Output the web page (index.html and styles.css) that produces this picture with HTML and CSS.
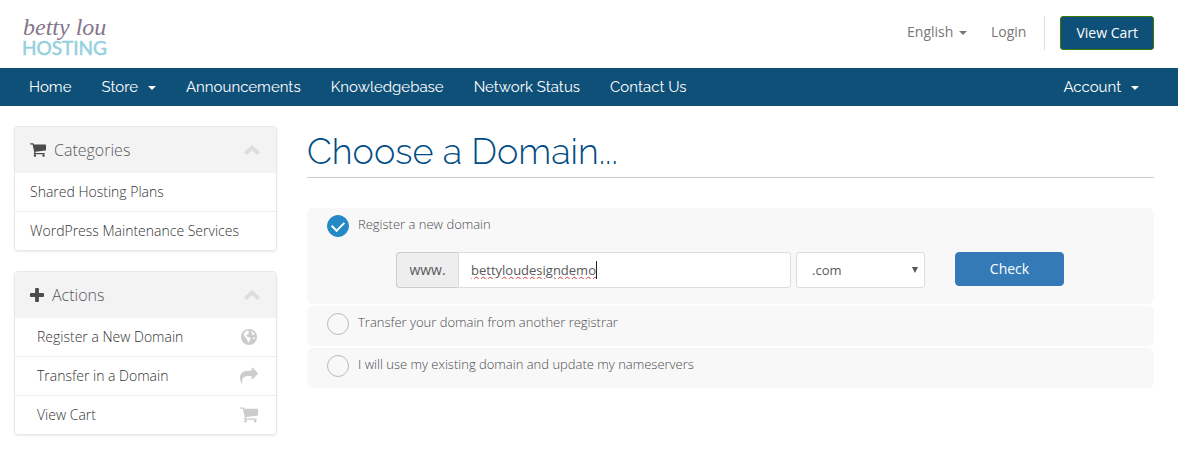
FILE: index.html
```html
<!DOCTYPE html>
<html lang="en">
  <head>
    <meta charset="UTF-8" />
    <meta name="viewport" content="width=device-width, initial-scale=1.0" />
    <title>Choose a Domain - Betty Lou Hosting</title>
    <link rel="stylesheet" href="styles.css">
  </head>
  <body>
    <!-- Shared icons -->
    <svg class="sprite" aria-hidden="true">
      <symbol id="icon-cart" viewBox="64 192 1664 1536">
        <path d="M704 1536q0 52-38 90t-90 38-90-38-38-90 38-90 90-38 90 38 38 90zm896 0q0 52-38 90t-90 38-90-38-38-90 38-90 90-38 90 38 38 90zm128-1088v512q0 24-16.500 42.500t-40.500 21.500l-1044 122q13 60 13 70 0 16-24 64h920q26 0 45 19t19 45-19 45-45 19h-1024q-26 0-45-19t-19-45q0-11 8-31.500t16-36 21.500-40 15.500-29.500l-177-823h-204q-26 0-45-19t-19-45 19-45 45-19h256q16 0 28.500 6.500t19.500 15.500 13 24.500 8 26 5.500 29.500 4.500 26h1201q26 0 45 19t19 45z"/>
      </symbol>
      <symbol id="icon-plus" viewBox="192 128 1408 1408">
        <path d="M1600 736v192q0 40-28 68t-68 28h-416v416q0 40-28 68t-68 28h-192q-40 0-68-28t-28-68v-416h-416q-40 0-68-28t-28-68v-192q0-40 28-68t68-28h416v-416q0-40 28-68t68-28h192q40 0 68 28t28 68v416h416q40 0 68 28t28 68z"/>
      </symbol>
      <symbol id="icon-share" viewBox="0 0 1792 1792">
        <path d="M1792 640q0 26-19 45l-512 512q-19 19-45 19t-45-19-19-45v-256h-224q-98 0-175.500 6t-154 21.500-133 42.500-105.500 69.500-80 101-48.500 138.500-17.500 181q0 55 5 123 0 6 2.500 23.500t2.500 26.500q0 15-8.500 25t-23.500 10q-16 0-28-17-7-9-13-22t-13.500-30-10.500-24q-127-285-127-451 0-199 53-333 162-403 875-403h224v-256q0-26 19-45t45-19 45 19l512 512q19 19 19 45z"/>
      </symbol>
      <symbol id="icon-globe" viewBox="-1 -1 18 18">
        <circle cx="8" cy="8" r="8"/>
        <path fill="#fff" d="M4.200 2.800L6.500 1.600L8 2.200L7.200 3.300L8.200 4L6.800 5.600L5.600 6L5 7L6.300 7.400L8.600 8.400L9.800 9.600L8.800 11.300L7.600 13.300L6.900 13.800L6.500 11.600L5.500 9.800L4 8L2.800 6.600L3 4.500Z M10.300 2.200L12.400 3.400L13.600 5.200L12 6L10.500 5.400L11.300 4.300L9.900 3.200Z M12 8.600L14 8L13.800 9.600L12.600 10.800Z"/>
      </symbol>
      <symbol id="icon-chevron" viewBox="0 0 16 10">
        <path d="M8 0L16 7.300L13.300 10L8 5.200L2.700 10L0 7.300Z"/>
      </symbol>
    </svg>

    <header class="header container">
      <a class="logo" href="#" aria-label="Betty Lou Hosting">
        <svg width="90" height="50" viewBox="0 0 90 50">
          <text class="logo-hosting" x="8" y="47">HOSTING</text>
          <text class="logo-script" x="9" y="27">betty lou</text>
        </svg>
      </a>
      <div class="top-nav">
        <a href="#">English <span class="caret"></span></a>
        <a href="#">Login</a>
        <div class="cart-wrap">
          <button type="button" class="btn btn-cart">View Cart</button>
        </div>
      </div>
    </header>

    <nav class="main-menu">
      <div class="container menu-inner">
        <a href="#">Home</a>
        <a href="#">Store <span class="caret"></span></a>
        <a href="#">Announcements</a>
        <a href="#">Knowledgebase</a>
        <a href="#">Network Status</a>
        <a href="#">Contact Us</a>
        <a href="#" class="account">Account <span class="caret"></span></a>
      </div>
    </nav>

    <div class="container page">
      <aside class="sidebar">
        <section class="panel">
          <h3 class="panel-heading">
            <svg class="icon"><use href="#icon-cart"/></svg>
            Categories
            <svg class="chevron"><use href="#icon-chevron"/></svg>
          </h3>
          <a class="panel-item" href="#">Shared Hosting Plans</a>
          <a class="panel-item" href="#">WordPress Maintenance Services</a>
        </section>

        <section class="panel actions">
          <h3 class="panel-heading">
            <svg class="icon icon-plus"><use href="#icon-plus"/></svg>
            Actions
            <svg class="chevron"><use href="#icon-chevron"/></svg>
          </h3>
          <a class="panel-item" href="#">Register a New Domain <svg class="icon"><use href="#icon-globe"/></svg></a>
          <a class="panel-item" href="#">Transfer in a Domain <svg class="icon"><use href="#icon-share"/></svg></a>
          <a class="panel-item" href="#">View Cart <svg class="icon"><use href="#icon-cart"/></svg></a>
        </section>
      </aside>

      <main class="content">
        <h1>Choose a Domain...</h1>
        <form id="domainForm">
          <div class="option">
            <label class="option-label">
              <input type="radio" name="domainoption" value="register" checked>
              <span>Register a new domain</span>
            </label>
            <div class="domain-row">
              <div class="input-group">
                <label class="addon" for="sld">www.</label>
                <div class="field">
                  <input type="text" id="sld" name="sld" value="bettyloudesigndemo" autocomplete="off">
                  <span class="text-cursor"></span>
                </div>
              </div>
              <div class="select-wrap">
                <select name="tld" aria-label="Domain extension">
                  <option>.com</option>
                  <option>.net</option>
                  <option>.org</option>
                </select>
              </div>
              <button type="submit" class="btn btn-check">Check</button>
            </div>
          </div>
          <div class="option">
            <label class="option-label">
              <input type="radio" name="domainoption" value="transfer">
              <span>Transfer your domain from another registrar</span>
            </label>
          </div>
          <div class="option">
            <label class="option-label">
              <input type="radio" name="domainoption" value="owndomain">
              <span>I will use my existing domain and update my nameservers</span>
            </label>
          </div>
        </form>
      </main>
    </div>
  </body>
</html>
```
FILE: styles.css
```css
* {
  box-sizing: border-box;
}
body {
  margin: 0;
  background-color: #fff;
  color: #58595b;
  font-family: "Open Sans", sans-serif;
  font-size: 14px;
  line-height: 20px;
}
a {
  color: inherit;
  text-decoration: none;
}
.sprite {
  display: none;
}
.container {
  padding: 0 24px 0 14px;
}

/* Header */
.header {
  display: flex;
  justify-content: space-between;
  align-items: flex-start;
  height: 68px;
}
.logo {
  padding-top: 8px;
}
.logo svg {
  display: block;
  overflow: visible;
}
.logo-script {
  font-family: "Liberation Serif", serif;
  font-size: 24px;
  font-style: italic;
  fill: #85758a;
}
.logo-hosting {
  font-family: Lato, sans-serif;
  font-size: 19px;
  fill: #94d0de;
  stroke: #94d0de;
  stroke-width: 0.5;
}
.top-nav {
  display: flex;
  align-items: flex-start;
  gap: 24px;
  padding-top: 16px;
  color: #777;
}
.top-nav a {
  padding: 6px 0;
}
.cart-wrap {
  margin-left: -6px;
  padding-left: 15px;
  border-left: 1px solid #ddd;
}
.caret {
  display: inline-block;
  margin-left: 2px;
  vertical-align: middle;
  border-top: 4px solid;
  border-left: 4px solid transparent;
  border-right: 4px solid transparent;
}
.btn {
  display: block;
  height: 34px;
  padding: 0 15px;
  border: 1px solid;
  border-radius: 4px;
  color: #fff;
  font: 14px/20px "Open Sans", sans-serif;
  cursor: pointer;
}
.btn-cart {
  background-color: #0f5079;
  border-color: #3c7a00;
  border-radius: 3px;
}

/* Main menu */
.main-menu {
  background-color: #0f5079;
  color: #fff;
  font-family: Raleway, Lato, sans-serif;
  font-size: 15px;
}
.menu-inner {
  display: flex;
}
.main-menu a {
  padding: 9px 15px;
}
.main-menu .caret {
  margin-left: 6px;
}
.main-menu .account {
  margin-left: auto;
}

/* Sidebar */
.page {
  display: flex;
  align-items: flex-start;
  gap: 30px;
  padding-top: 20px;
}
.sidebar {
  flex: 0 0 263px;
}
.panel {
  margin-bottom: 20px;
  border: 1px solid #e8e8e8;
  border-radius: 4px;
  box-shadow: 0 1px 2px rgba(0, 0, 0, 0.08);
  overflow: hidden;
}
.panel-heading {
  display: flex;
  align-items: center;
  gap: 8px;
  margin: 0;
  padding: 13px 16px 13px 15px;
  background-color: #f3f3f3;
  font-size: 16px;
  font-weight: 300;
}
.panel-item {
  display: flex;
  align-items: center;
  justify-content: space-between;
  padding: 9px 15px;
  color: #333;
  font-weight: 350;
}
.panel-item + .panel-item {
  border-top: 1px solid #eee;
}
.actions .panel-item {
  padding: 9px 18px 9px 22px;
}
.icon {
  width: 16px;
  height: 16px;
  fill: #4b4b4d;
}
.icon-plus {
  width: 14px;
  height: 14px;
}
.panel-item .icon {
  width: 18px;
  height: 18px;
  fill: #ccc;
}
.chevron {
  width: 16px;
  height: 10px;
  margin-left: auto;
  fill: #ddd;
}

/* Content */
.content {
  flex: 1;
}
h1 {
  margin: 0 0 30px;
  padding: 5px 0 6px;
  border-bottom: 1px solid #ccc;
  color: #004c84;
  font-family: Raleway, Lato, sans-serif;
  font-size: 36px;
  font-weight: 300;
  line-height: 40px;
}
.option {
  margin-bottom: 2px;
  padding: 7px 20px;
  background-color: #f8f8f8;
  border-radius: 6px;
}
.option-label {
  display: flex;
  gap: 9px;
  height: 26px;
  color: #4a4b4d;
  font-size: 13px;
  font-weight: 300;
  line-height: 18px;
}
.option-label input {
  appearance: none;
  width: 22px;
  height: 22px;
  margin: 0;
  border: 1px solid #bbb;
  border-radius: 50%;
}
.option-label input:checked {
  display: grid;
  place-content: center;
  background-color: #2489c5;
  border-color: #2489c5;
}
.option-label input:checked::before {
  content: "";
  width: 10px;
  height: 6px;
  margin-bottom: 3px;
  border-left: 2px solid #fff;
  border-bottom: 2px solid #fff;
  transform: rotate(-45deg);
}
.domain-row {
  display: flex;
  align-items: flex-start;
  margin: 11px 70px 9px 69px;
}
.input-group {
  display: flex;
  flex: 1;
}
.addon {
  width: 62px;
  padding: 7px 0;
  border: 1px solid #ccc;
  border-right: 0;
  border-radius: 4px 0 0 4px;
  background-color: #eee;
  text-align: center;
}
.field {
  position: relative;
  flex: 1;
}
.field input,
.select-wrap select {
  display: block;
  width: 100%;
  height: 36px;
  padding: 0 12px;
  border: 1px solid #ddd;
  background-color: #fff;
  color: #58595b;
  font: 13px/20px "Open Sans", sans-serif;
  outline: 0;
}
.field input {
  border-radius: 0 3px 3px 0;
  text-decoration: underline wavy #d33 1px;
}
.text-cursor {
  position: absolute;
  left: 138px;
  top: 9px;
  width: 1px;
  height: 18px;
  background-color: #222;
}
.select-wrap {
  position: relative;
  width: 129px;
  margin: 0 30px 0 5px;
}
.select-wrap select {
  appearance: none;
  padding: 0 15px;
  border-radius: 3px;
}
.select-wrap::after {
  content: "";
  position: absolute;
  right: 7px;
  top: 15px;
  border-top: 6px solid #555;
  border-left: 3px solid transparent;
  border-right: 3px solid transparent;
  pointer-events: none;
}
.btn-check {
  width: 109px;
  background-color: #337ab7;
  border-color: #337ab7;
}
@media (max-width: 768px) {
  .page,
  .menu-inner {
    flex-direction: column;
    align-items: stretch;
  }
  .main-menu .account {
    margin-left: 0;
  }
  .domain-row {
    flex-wrap: wrap;
    gap: 10px;
    margin: 11px 0 9px;
  }
}
```
